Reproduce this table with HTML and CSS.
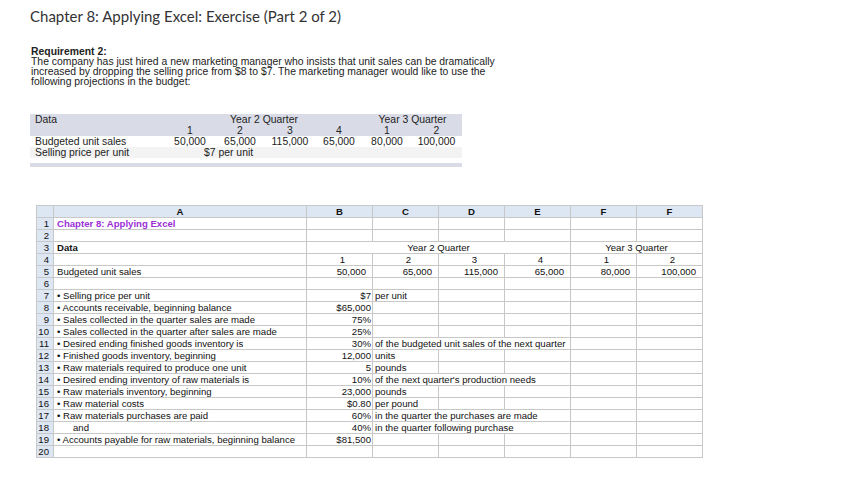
FILE: index.html
```html
<!DOCTYPE html>
<html>
<head>
<meta charset="utf-8">
<link rel="stylesheet" href="styles.css">
</head>
<body>
<div class="page">
  <h1 class="title">Chapter 8: Applying Excel: Exercise (Part 2 of 2)</h1>
  <div class="req">
    <div class="req-head">Requirement 2:</div>
    <p class="req-text">The company has just hired a new marketing manager who insists that unit sales can be dramatically<br>increased by dropping the selling price from $8 to $7. The marketing manager would like to use the<br>following projections in the budget:</p>
  </div>

  <div class="dt">
    <div class="dt-band">
      <div class="dt-label">Data</div>
      <div class="dt-span4">Year 2 Quarter</div>
      <div class="dt-span2">Year 3 Quarter</div>
      <div class="dt-label"></div>
      <div class="dt-c">1</div><div class="dt-c">2</div><div class="dt-c">3</div><div class="dt-c">4</div><div class="dt-c">1</div><div class="dt-c">2</div>
    </div>
    <div class="dt-row">
      <div class="dt-label">Budgeted unit sales</div>
      <div class="dt-c">50,000</div><div class="dt-c">65,000</div><div class="dt-c">115,000</div><div class="dt-c">65,000</div><div class="dt-c">80,000</div><div class="dt-c">100,000</div>
    </div>
    <div class="dt-row dt-alt">
      <div class="dt-label">Selling price per unit</div>
      <div class="dt-price">$7 per unit</div>
    </div>
    <div class="dt-bar"></div>
  </div>

  <div class="sheet">
    <div class="hd"></div><div class="hd">A</div><div class="hd">B</div><div class="hd">C</div><div class="hd">D</div><div class="hd">E</div><div class="hd">F</div><div class="hd">F</div>

    <div class="rn">1</div><div class="c title-cell">Chapter 8: Applying Excel</div><div class="c"></div><div class="c"></div><div class="c"></div><div class="c"></div><div class="c"></div><div class="c"></div>
    <div class="rn">2</div><div class="c"></div><div class="c"></div><div class="c"></div><div class="c"></div><div class="c"></div><div class="c"></div><div class="c"></div>
    <div class="rn">3</div><div class="c bold">Data</div><div class="c ctr span4">Year 2 Quarter</div><div class="c ctr span2">Year 3 Quarter</div>
    <div class="rn">4</div><div class="c"></div><div class="c q">1</div><div class="c q">2</div><div class="c q">3</div><div class="c q">4</div><div class="c q">1</div><div class="c q">2</div>
    <div class="rn">5</div><div class="c">Budgeted unit sales</div><div class="c num">50,000</div><div class="c num">65,000</div><div class="c num">115,000</div><div class="c num">65,000</div><div class="c num">80,000</div><div class="c num">100,000</div>
    <div class="rn">6</div><div class="c"></div><div class="c"></div><div class="c"></div><div class="c"></div><div class="c"></div><div class="c"></div><div class="c"></div>
    <div class="rn">7</div><div class="c">• Selling price per unit</div><div class="c val">$7</div><div class="c txt">per unit</div><div class="c"></div><div class="c"></div><div class="c"></div><div class="c"></div>
    <div class="rn">8</div><div class="c">• Accounts receivable, beginning balance</div><div class="c val">$65,000</div><div class="c"></div><div class="c"></div><div class="c"></div><div class="c"></div><div class="c"></div>
    <div class="rn">9</div><div class="c">• Sales collected in the quarter sales are made</div><div class="c val">75%</div><div class="c"></div><div class="c"></div><div class="c"></div><div class="c"></div><div class="c"></div>
    <div class="rn">10</div><div class="c">• Sales collected in the quarter after sales are made</div><div class="c val">25%</div><div class="c"></div><div class="c"></div><div class="c"></div><div class="c"></div><div class="c"></div>
    <div class="rn">11</div><div class="c">• Desired ending finished goods inventory is</div><div class="c val">30%</div><div class="c txt span3">of the budgeted unit sales of the next quarter</div><div class="c"></div><div class="c"></div>
    <div class="rn">12</div><div class="c">• Finished goods inventory, beginning</div><div class="c val">12,000</div><div class="c txt">units</div><div class="c"></div><div class="c"></div><div class="c"></div><div class="c"></div>
    <div class="rn">13</div><div class="c">• Raw materials required to produce one unit</div><div class="c val">5</div><div class="c txt">pounds</div><div class="c"></div><div class="c"></div><div class="c"></div><div class="c"></div>
    <div class="rn">14</div><div class="c">• Desired ending inventory of raw materials is</div><div class="c val">10%</div><div class="c txt span3">of the next quarter's production needs</div><div class="c"></div><div class="c"></div>
    <div class="rn">15</div><div class="c">• Raw materials inventory, beginning</div><div class="c val">23,000</div><div class="c txt">pounds</div><div class="c"></div><div class="c"></div><div class="c"></div><div class="c"></div>
    <div class="rn">16</div><div class="c">• Raw material costs</div><div class="c val">$0.80</div><div class="c txt">per pound</div><div class="c"></div><div class="c"></div><div class="c"></div><div class="c"></div>
    <div class="rn">17</div><div class="c">• Raw materials purchases are paid</div><div class="c val">60%</div><div class="c txt span3">in the quarter the purchases are made</div><div class="c"></div><div class="c"></div>
    <div class="rn">18</div><div class="c indent">and</div><div class="c val">40%</div><div class="c txt span3">in the quarter following purchase</div><div class="c"></div><div class="c"></div>
    <div class="rn">19</div><div class="c">• Accounts payable for raw materials, beginning balance</div><div class="c val">$81,500</div><div class="c"></div><div class="c"></div><div class="c"></div><div class="c"></div><div class="c"></div>
    <div class="rn">20</div><div class="c"></div><div class="c"></div><div class="c"></div><div class="c"></div><div class="c"></div><div class="c"></div><div class="c"></div>
  </div>
</div>
</body>
</html>
```

FILE: styles.css
```css
html, body {
  margin: 0;
  padding: 0;
  background: #ffffff;
}

.page {
  padding: 6px 0 0 30px;
  font-family: "Liberation Sans", Arial, sans-serif;
  color: #222;
}

.title {
  margin: 0;
  font-family: Lato, "Liberation Sans", sans-serif;
  font-weight: 400;
  font-size: 15px;
  line-height: 20px;
  color: #333;
}

.req {
  margin-top: 21px;
  font-size: 10.4px;
  line-height: 10px;
  padding-left: 1px;
}

.req-head {
  font-weight: 700;
}

.req-text {
  margin: 0;
}

/* Data table */
.dt {
  margin-top: 27px;
  width: 432px;
  font-size: 10.4px;
  line-height: 11px;
}

.dt-band,
.dt-row {
  display: grid;
  grid-template-columns: 135px 50px 50px 50px 48px 48px 51px;
}

.dt-band {
  background: #d9dce6;
}

.dt-alt {
  background: #f3f3f3;
}

.dt-label {
  padding-left: 5px;
}

.dt-c {
  text-align: center;
}

.dt-span4 {
  grid-column: span 4;
  text-align: center;
}

.dt-span2 {
  grid-column: span 2;
  text-align: center;
}

.dt-price {
  grid-column: span 3;
  padding-left: 39px;
}

.dt-bar {
  margin-top: 5px;
  height: 4px;
  background: #d9dce6;
}

/* Spreadsheet */
.sheet {
  margin-top: 38px;
  margin-left: 6px;
  display: grid;
  grid-template-columns: 16px 252px repeat(6, 65px);
  grid-auto-rows: 11px;
  gap: 1px;
  padding: 1px;
  background: #c8c8c8;
  width: max-content;
  font-size: 9.6px;
  line-height: 11px;
  color: #111;
}

.hd {
  background: #dde6f3;
  text-align: center;
  font-weight: 700;
}

.rn {
  background: #dde6f3;
  text-align: right;
  padding-right: 4px;
}

.c {
  background: #ffffff;
  padding-left: 3px;
  white-space: nowrap;
  overflow: hidden;
}

.title-cell {
  color: #9b2fd6;
  font-weight: 700;
}

.bold {
  font-weight: 700;
}

.ctr {
  text-align: center;
  padding-left: 0;
}

.span4 {
  grid-column: span 4;
}

.span3 {
  grid-column: span 3;
}

.span2 {
  grid-column: span 2;
}

.q {
  text-align: center;
  padding-left: 6px;
}

.num {
  text-align: right;
  padding-right: 6px;
}

.val {
  text-align: right;
  padding-right: 1px;
}

.txt {
  padding-left: 2px;
}

.indent {
  padding-left: 19px;
}
```
